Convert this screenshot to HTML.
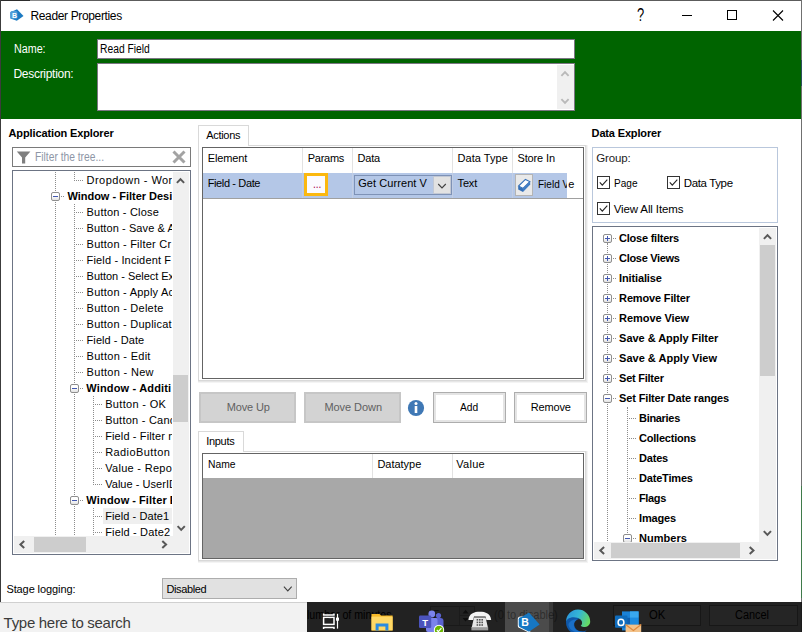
<!DOCTYPE html>
<html lang="en">
<head>
<meta charset="utf-8">
<title>Reader Properties</title>
<style>
*{box-sizing:border-box;margin:0;padding:0}
html,body{width:802px;height:632px;overflow:hidden;background:#fff}
body{font-family:"Liberation Sans",sans-serif;font-size:11px;color:#000;position:relative}
.a{position:absolute}
.t{position:absolute;white-space:nowrap}
svg{position:absolute;left:0;top:0;overflow:visible}
#win{position:absolute;left:0;top:0;width:802px;height:632px;background:#fff;overflow:hidden}
.clip{position:absolute;overflow:hidden}
</style>
</head>
<body>
<div id="win">
<div class="a" style="left:0px;top:0px;width:802px;height:1px;background:#5c5c5c;"></div>
<div class="a" style="left:0px;top:0px;width:30px;height:1px;background:#2c2c2c;"></div>
<div class="a" style="left:30px;top:0px;width:20px;height:1px;background:#8c8c8c;"></div>
<div class="a" style="left:0px;top:0px;width:1px;height:603px;background:#3c3c3c;"></div>
<div class="a" style="left:801px;top:0px;width:1px;height:603px;background:#707070;"></div>
<div class="a" style="left:801px;top:60px;width:1px;height:26px;background:#2d4f5e;"></div>
<div class="a" style="left:801px;top:486px;width:1px;height:112px;background:#3f7a4a;"></div>
<svg width="802" height="31" viewBox="0 0 802 31">
<polygon points="10.4,12.2 17,9.2 23.5,16 16.8,20.8 10.4,18.4" fill="#1c7ac2"/>
<rect x="10.4" y="11" width="7" height="7.8" rx="1.6" fill="#4f9dd8"/>
<text x="11.9" y="17.7" font-family="Liberation Sans, sans-serif" font-size="7" font-weight="bold" fill="#fff">B</text>
<text x="637" y="21.2" font-family="Liberation Sans, sans-serif" font-size="17.5" fill="#000" transform="translate(637.2 0) scale(0.74 1) translate(-637.2 0)">?</text>
<line x1="682" y1="15.5" x2="692" y2="15.5" stroke="#000" stroke-width="1"/>
<rect x="727.5" y="10.5" width="9" height="9" fill="none" stroke="#000" stroke-width="1"/>
<path d="M773 10.5 L783 20.5 M783 10.5 L773 20.5" stroke="#000" stroke-width="1.1" fill="none"/>
</svg>
<div class="t" style="left:30.5px;top:10px;font-size:12px;line-height:12px;letter-spacing:-0.358px;">Reader Properties</div>
<div class="a" style="left:1px;top:31px;width:800px;height:88px;background:#006400;"></div>
<div class="t" style="left:13.5px;top:43px;font-size:12px;line-height:12px;color:#fff;transform:scaleX(0.8941);transform-origin:0 0;">Name:</div>
<div class="t" style="left:13.5px;top:68px;font-size:12px;line-height:12px;color:#fff;letter-spacing:-0.297px;">Description:</div>
<div class="a" style="left:97px;top:39px;width:478px;height:20px;background:#fff;border:1px solid #7b7583;"></div>
<div class="t" style="left:100.4px;top:43px;font-size:12px;line-height:12px;transform:scaleX(0.8582);transform-origin:0 0;">Read Field</div>
<div class="a" style="left:97px;top:63px;width:478px;height:48px;background:#fff;border:1px solid #7b7583;"></div>
<div class="a" style="left:557px;top:65px;width:17px;height:44px;background:#f0f0f0;"></div>
<svg width="802" height="120" viewBox="0 0 802 120"><polyline points="561.4,75.85 565,72.15 568.6,75.85" fill="none" stroke="#b9b9b9" stroke-width="1.9"/><polyline points="561.4,99.15 565,102.85 568.6,99.15" fill="none" stroke="#b9b9b9" stroke-width="1.9"/></svg>
<div class="t" style="left:8.5px;top:128px;font-size:11px;line-height:11px;font-weight:bold;letter-spacing:-0.119px;">Application Explorer</div>
<div class="a" style="left:12px;top:147px;width:179px;height:20px;background:#fff;border:1px solid #7a7a7a;"></div>
<svg width="802" height="170" viewBox="0 0 802 170">
<path d="M16.8 151.4 H30.4 L25.2 157.6 V163.6 H22 V157.6 Z" fill="#7f7f7f"/>
<path d="M173.5 151.5 L184.5 162.5 M184.5 151.5 L173.5 162.5" stroke="#a3a3a3" stroke-width="3" fill="none"/>
</svg>
<div class="t" style="left:35.3px;top:151px;font-size:12px;line-height:12px;color:#8e96a6;transform:scaleX(0.8550);transform-origin:0 0;">Filter the tree...</div>
<div class="a" style="left:12px;top:170px;width:179px;height:385px;background:#fff;border:1px solid #6c7484;"></div>
<div class="a" style="left:55px;top:172px;width:1px;height:364px;background:repeating-linear-gradient(to bottom,#8c8c8c 0 1px,transparent 1px 2px);background-position:0 0px;"></div>
<div class="a" style="left:74px;top:172px;width:1px;height:9px;background:repeating-linear-gradient(to bottom,#8c8c8c 0 1px,transparent 1px 2px);background-position:0 0px;"></div>
<div class="a" style="left:74px;top:204px;width:1px;height:332px;background:repeating-linear-gradient(to bottom,#8c8c8c 0 1px,transparent 1px 2px);background-position:0 0px;"></div>
<div class="a" style="left:93px;top:396px;width:1px;height:89px;background:repeating-linear-gradient(to bottom,#8c8c8c 0 1px,transparent 1px 2px);background-position:0 0px;"></div>
<div class="a" style="left:93px;top:508px;width:1px;height:28px;background:repeating-linear-gradient(to bottom,#8c8c8c 0 1px,transparent 1px 2px);background-position:0 0px;"></div>
<div class="clip" style="left:13px;top:171px;width:159px;height:365px">
<div class="a" style="left:90px;top:337px;width:70px;height:16px;background:#efefef;"></div>
<div class="t" style="left:73.6px;top:4px;font-size:11px;line-height:11px;letter-spacing:0.445px;">Dropdown - Wor</div>
<div class="t" style="left:54.400000000000006px;top:20px;font-size:11px;line-height:11px;font-weight:bold;letter-spacing:-0.006px;">Window - Filter Desi</div>
<div class="t" style="left:73.6px;top:36px;font-size:11px;line-height:11px;letter-spacing:0.193px;">Button - Close</div>
<div class="t" style="left:73.6px;top:52px;font-size:11px;line-height:11px;letter-spacing:0.084px;">Button - Save &amp; A</div>
<div class="t" style="left:73.6px;top:68px;font-size:11px;line-height:11px;letter-spacing:0.222px;">Button - Filter Cr</div>
<div class="t" style="left:73.6px;top:84px;font-size:11px;line-height:11px;letter-spacing:0.149px;">Field - Incident F</div>
<div class="t" style="left:73.6px;top:100px;font-size:11px;line-height:11px;letter-spacing:-0.032px;">Button - Select Ex</div>
<div class="t" style="left:73.6px;top:116px;font-size:11px;line-height:11px;letter-spacing:0.232px;">Button - Apply Ac</div>
<div class="t" style="left:73.6px;top:132px;font-size:11px;line-height:11px;letter-spacing:0.242px;">Button - Delete</div>
<div class="t" style="left:73.6px;top:148px;font-size:11px;line-height:11px;letter-spacing:0.233px;">Button - Duplicat</div>
<div class="t" style="left:73.6px;top:164px;font-size:11px;line-height:11px;letter-spacing:0.062px;">Field - Date</div>
<div class="t" style="left:73.6px;top:180px;font-size:11px;line-height:11px;letter-spacing:0.273px;">Button - Edit</div>
<div class="t" style="left:73.6px;top:196px;font-size:11px;line-height:11px;letter-spacing:0.301px;">Button - New</div>
<div class="t" style="left:73.3px;top:212px;font-size:11px;line-height:11px;font-weight:bold;letter-spacing:0.160px;">Window - Additi</div>
<div class="t" style="left:92.2px;top:228px;font-size:11px;line-height:11px;letter-spacing:0.320px;">Button - OK</div>
<div class="t" style="left:92.2px;top:244px;font-size:11px;line-height:11px;letter-spacing:0.236px;">Button - Canc</div>
<div class="t" style="left:92.2px;top:260px;font-size:11px;line-height:11px;letter-spacing:0.124px;">Field - Filter n</div>
<div class="t" style="left:92.2px;top:276px;font-size:11px;line-height:11px;letter-spacing:0.405px;">RadioButton</div>
<div class="t" style="left:92.2px;top:292px;font-size:11px;line-height:11px;letter-spacing:0.301px;">Value - Repo</div>
<div class="t" style="left:92.2px;top:308px;font-size:11px;line-height:11px;letter-spacing:0.033px;">Value - UserID</div>
<div class="t" style="left:73.3px;top:324px;font-size:11px;line-height:11px;font-weight:bold;letter-spacing:0.179px;word-spacing:-0.4px;">Window - Filter E</div>
<div class="t" style="left:92.2px;top:340px;font-size:11px;line-height:11px;letter-spacing:0.078px;">Field - Date1</div>
<div class="t" style="left:92.2px;top:356px;font-size:11px;line-height:11px;letter-spacing:0.155px;">Field - Date2</div>
</div>
<div class="a" style="left:76px;top:180px;width:7px;height:1px;background:repeating-linear-gradient(to right,#8c8c8c 0 1px,transparent 1px 2px);background-position:0px 0;"></div>
<div class="a" style="left:61px;top:196px;width:3px;height:1px;background:repeating-linear-gradient(to right,#8c8c8c 0 1px,transparent 1px 2px);background-position:0px 0;"></div>
<div class="a" style="left:51px;top:192px;width:9px;height:9px;background:linear-gradient(#fff 40%,#e2e2e2);border:1px solid #8e8e8e;border-radius:2px;"><div class="a" style="left:1px;top:3px;width:5px;height:1px;background:#4258b0"></div></div>
<div class="a" style="left:76px;top:212px;width:7px;height:1px;background:repeating-linear-gradient(to right,#8c8c8c 0 1px,transparent 1px 2px);background-position:0px 0;"></div>
<div class="a" style="left:76px;top:228px;width:7px;height:1px;background:repeating-linear-gradient(to right,#8c8c8c 0 1px,transparent 1px 2px);background-position:0px 0;"></div>
<div class="a" style="left:76px;top:244px;width:7px;height:1px;background:repeating-linear-gradient(to right,#8c8c8c 0 1px,transparent 1px 2px);background-position:0px 0;"></div>
<div class="a" style="left:76px;top:260px;width:7px;height:1px;background:repeating-linear-gradient(to right,#8c8c8c 0 1px,transparent 1px 2px);background-position:0px 0;"></div>
<div class="a" style="left:76px;top:276px;width:7px;height:1px;background:repeating-linear-gradient(to right,#8c8c8c 0 1px,transparent 1px 2px);background-position:0px 0;"></div>
<div class="a" style="left:76px;top:292px;width:7px;height:1px;background:repeating-linear-gradient(to right,#8c8c8c 0 1px,transparent 1px 2px);background-position:0px 0;"></div>
<div class="a" style="left:76px;top:308px;width:7px;height:1px;background:repeating-linear-gradient(to right,#8c8c8c 0 1px,transparent 1px 2px);background-position:0px 0;"></div>
<div class="a" style="left:76px;top:324px;width:7px;height:1px;background:repeating-linear-gradient(to right,#8c8c8c 0 1px,transparent 1px 2px);background-position:0px 0;"></div>
<div class="a" style="left:76px;top:340px;width:7px;height:1px;background:repeating-linear-gradient(to right,#8c8c8c 0 1px,transparent 1px 2px);background-position:0px 0;"></div>
<div class="a" style="left:76px;top:356px;width:7px;height:1px;background:repeating-linear-gradient(to right,#8c8c8c 0 1px,transparent 1px 2px);background-position:0px 0;"></div>
<div class="a" style="left:76px;top:372px;width:7px;height:1px;background:repeating-linear-gradient(to right,#8c8c8c 0 1px,transparent 1px 2px);background-position:0px 0;"></div>
<div class="a" style="left:80px;top:388px;width:3px;height:1px;background:repeating-linear-gradient(to right,#8c8c8c 0 1px,transparent 1px 2px);background-position:0px 0;"></div>
<div class="a" style="left:70px;top:384px;width:9px;height:9px;background:linear-gradient(#fff 40%,#e2e2e2);border:1px solid #8e8e8e;border-radius:2px;"><div class="a" style="left:1px;top:3px;width:5px;height:1px;background:#4258b0"></div></div>
<div class="a" style="left:95px;top:404px;width:7px;height:1px;background:repeating-linear-gradient(to right,#8c8c8c 0 1px,transparent 1px 2px);background-position:0px 0;"></div>
<div class="a" style="left:95px;top:420px;width:7px;height:1px;background:repeating-linear-gradient(to right,#8c8c8c 0 1px,transparent 1px 2px);background-position:0px 0;"></div>
<div class="a" style="left:95px;top:436px;width:7px;height:1px;background:repeating-linear-gradient(to right,#8c8c8c 0 1px,transparent 1px 2px);background-position:0px 0;"></div>
<div class="a" style="left:95px;top:452px;width:7px;height:1px;background:repeating-linear-gradient(to right,#8c8c8c 0 1px,transparent 1px 2px);background-position:0px 0;"></div>
<div class="a" style="left:95px;top:468px;width:7px;height:1px;background:repeating-linear-gradient(to right,#8c8c8c 0 1px,transparent 1px 2px);background-position:0px 0;"></div>
<div class="a" style="left:95px;top:484px;width:7px;height:1px;background:repeating-linear-gradient(to right,#8c8c8c 0 1px,transparent 1px 2px);background-position:0px 0;"></div>
<div class="a" style="left:80px;top:500px;width:3px;height:1px;background:repeating-linear-gradient(to right,#8c8c8c 0 1px,transparent 1px 2px);background-position:0px 0;"></div>
<div class="a" style="left:70px;top:496px;width:9px;height:9px;background:linear-gradient(#fff 40%,#e2e2e2);border:1px solid #8e8e8e;border-radius:2px;"><div class="a" style="left:1px;top:3px;width:5px;height:1px;background:#4258b0"></div></div>
<div class="a" style="left:95px;top:516px;width:7px;height:1px;background:repeating-linear-gradient(to right,#8c8c8c 0 1px,transparent 1px 2px);background-position:0px 0;"></div>
<div class="a" style="left:95px;top:532px;width:7px;height:1px;background:repeating-linear-gradient(to right,#8c8c8c 0 1px,transparent 1px 2px);background-position:0px 0;"></div>
<div class="a" style="left:173px;top:172px;width:16px;height:381px;background:#f0f0f0;"></div>
<div class="a" style="left:173px;top:375px;width:15px;height:47px;background:#cdcdcd;"></div>
<div class="a" style="left:14px;top:536px;width:159px;height:17px;background:#f0f0f0;"></div>
<div class="a" style="left:34px;top:537px;width:52px;height:15px;background:#cdcdcd;"></div>
<svg width="802" height="632" viewBox="0 0 802 632"><polyline points="176.9,182.9 180.5,179.1 184.1,182.9" fill="none" stroke="#585858" stroke-width="2"/><polyline points="177.6,526.1 181.2,529.9 184.79999999999998,526.1" fill="none" stroke="#585858" stroke-width="2"/><polyline points="24.2,540.9 20.400000000000002,544.5 24.2,548.1" fill="none" stroke="#585858" stroke-width="2"/><polyline points="162.29999999999998,540.9 166.1,544.5 162.29999999999998,548.1" fill="none" stroke="#585858" stroke-width="2"/></svg>
<div class="a" style="left:198px;top:145px;width:390px;height:238px;background:#f4f4f4;"></div>
<div class="a" style="left:198px;top:145px;width:389px;height:237px;background:#e6e6e6;"></div>
<div class="a" style="left:198px;top:145px;width:388px;height:236px;background:#fff;border:1px solid #d8d8d8;"></div>
<div class="a" style="left:198px;top:125px;width:51px;height:21px;background:#fff;border:1px solid #d9d9d9;border-bottom:none;"></div>
<div class="t" style="left:206.2px;top:130px;font-size:11px;line-height:11px;letter-spacing:-0.297px;">Actions</div>
<div class="a" style="left:202px;top:147px;width:382px;height:232px;background:#fff;border:1px solid #646464;"></div>
<div class="a" style="left:302px;top:148px;width:1px;height:25px;background:#e2e2e2;"></div>
<div class="a" style="left:352px;top:148px;width:1px;height:25px;background:#e2e2e2;"></div>
<div class="a" style="left:452px;top:148px;width:1px;height:25px;background:#e2e2e2;"></div>
<div class="a" style="left:512px;top:148px;width:1px;height:25px;background:#e2e2e2;"></div>
<div class="t" style="left:207.7px;top:153px;font-size:11px;line-height:11px;letter-spacing:-0.137px;">Element</div>
<div class="t" style="left:307.7px;top:153px;font-size:11px;line-height:11px;letter-spacing:-0.251px;">Params</div>
<div class="t" style="left:357.6px;top:153px;font-size:11px;line-height:11px;letter-spacing:-0.237px;">Data</div>
<div class="t" style="left:457.6px;top:153px;font-size:11px;line-height:11px;letter-spacing:0.027px;">Data Type</div>
<div class="t" style="left:517.5px;top:153px;font-size:11px;line-height:11px;letter-spacing:-0.141px;">Store In</div>
<div class="a" style="left:203px;top:173px;width:364px;height:25px;background:#b4c7e7;"></div>
<div class="a" style="left:203px;top:198px;width:380px;height:1px;background:#a0a0a0;"></div>
<div class="a" style="left:302px;top:173px;width:1px;height:25px;background:#c2cee4;"></div>
<div class="a" style="left:352px;top:173px;width:1px;height:25px;background:#c2cee4;"></div>
<div class="a" style="left:452px;top:173px;width:1px;height:25px;background:#c2cee4;"></div>
<div class="a" style="left:512px;top:173px;width:1px;height:25px;background:#c2cee4;"></div>
<div class="t" style="left:207.7px;top:178px;font-size:11px;line-height:11px;letter-spacing:-0.372px;">Field - Date</div>
<div class="a" style="left:304px;top:173px;width:24px;height:23px;background:#fbfbff;border:3px solid #fbb80f;"></div>
<div class="t" style="left:312.5px;top:178px;font-size:12px;line-height:12px;color:#a8004e;transform:scaleX(0.8387);transform-origin:0 0;">...</div>
<div class="a" style="left:354px;top:175px;width:98px;height:20px;background:#b4c7e7;border:1px solid #7e92b6;"></div>
<div class="t" style="left:358.2px;top:178px;font-size:11px;line-height:11px;letter-spacing:0.072px;">Get Current V</div>
<div class="a" style="left:433px;top:176px;width:18px;height:18px;background:#e2e2e2;border:1px solid #c2c8d4;"></div>
<svg width="802" height="200" viewBox="0 0 802 200"><polyline points="438.2,184.0 442,188.0 445.8,184.0" fill="none" stroke="#404040" stroke-width="1.1"/></svg>
<div class="t" style="left:457.6px;top:178px;font-size:11px;line-height:11px;letter-spacing:-0.172px;">Text</div>
<div class="a" style="left:515px;top:174px;width:18px;height:22px;background:#e9e9e9;border:1px solid #b4b4b4;"></div>
<svg width="802" height="200" viewBox="0 0 802 200"><polygon points="518.6,186 525.4,179.4 529.8,181.6 523,188.4" fill="#fff" stroke="#3570b8" stroke-width="1.1"/><polygon points="518.2,186.2 523,188.6 523,192 518.2,189.4" fill="#3570b8"/><polygon points="523,188.6 530.2,181.4 530.2,184.6 523,192" fill="#3f7cc4"/></svg>
<div class="clip" style="left:536px;top:174px;width:31px;height:24px">
<div class="t" style="left:2.4px;top:5px;font-size:11px;line-height:11px;transform:scaleX(0.9109);transform-origin:0 0;">Field V</div>
</div>
<div class="t" style="left:568.2px;top:179px;font-size:11px;line-height:11px;">e</div>
<div class="a" style="left:199px;top:392px;width:97px;height:31px;background:#d3d3d3;border:2px solid #c6c6c6;"></div>
<div class="t" style="left:226.7px;top:402px;font-size:11px;line-height:11px;color:#616161;letter-spacing:-0.133px;">Move Up</div>
<div class="a" style="left:304px;top:392px;width:97px;height:31px;background:#d3d3d3;border:2px solid #c6c6c6;"></div>
<div class="t" style="left:324.4px;top:402px;font-size:11px;line-height:11px;color:#616161;letter-spacing:-0.053px;">Move Down</div>
<svg width="802" height="430" viewBox="0 0 802 430"><circle cx="416" cy="408" r="8.1" fill="#3f78b5"/><circle cx="416" cy="403.4" r="1.5" fill="#fff"/><rect x="414.7" y="406" width="2.6" height="7" fill="#fff"/></svg>
<div class="a" style="left:433px;top:392px;width:73px;height:31px;background:#fff;border:1px solid #adadad;"><div class="a" style="left:0;top:0;right:0;bottom:0;border:2px solid #e4e4e4"></div></div>
<div class="t" style="left:460.3px;top:402px;font-size:11px;line-height:11px;transform:scaleX(0.9296);transform-origin:0 0;">Add</div>
<div class="a" style="left:514px;top:392px;width:73px;height:31px;background:#fff;border:1px solid #adadad;"><div class="a" style="left:0;top:0;right:0;bottom:0;border:2px solid #e4e4e4"></div></div>
<div class="t" style="left:530.8px;top:402px;font-size:11px;line-height:11px;letter-spacing:-0.161px;">Remove</div>
<div class="a" style="left:198px;top:451px;width:390px;height:112px;background:#f4f4f4;"></div>
<div class="a" style="left:198px;top:451px;width:389px;height:111px;background:#e6e6e6;"></div>
<div class="a" style="left:198px;top:451px;width:388px;height:110px;background:#fff;border:1px solid #d8d8d8;"></div>
<div class="a" style="left:198px;top:431px;width:46px;height:21px;background:#fff;border:1px solid #d9d9d9;border-bottom:none;"></div>
<div class="t" style="left:206.2px;top:436px;font-size:11px;line-height:11px;letter-spacing:-0.295px;">Inputs</div>
<div class="a" style="left:202px;top:453px;width:382px;height:106px;background:#a8a8a8;border:1px solid #646464;"></div>
<div class="a" style="left:203px;top:454px;width:380px;height:24px;background:#fff;"></div>
<div class="a" style="left:372px;top:454px;width:1px;height:24px;background:#e2e2e2;"></div>
<div class="a" style="left:452px;top:454px;width:1px;height:24px;background:#e2e2e2;"></div>
<div class="t" style="left:207.7px;top:459px;font-size:11px;line-height:11px;transform:scaleX(0.9372);transform-origin:0 0;">Name</div>
<div class="t" style="left:377.4px;top:459px;font-size:11px;line-height:11px;letter-spacing:-0.016px;">Datatype</div>
<div class="t" style="left:456.3px;top:459px;font-size:11px;line-height:11px;letter-spacing:0.274px;">Value</div>
<div class="t" style="left:591.6px;top:128px;font-size:11px;line-height:11px;font-weight:bold;letter-spacing:-0.156px;">Data Explorer</div>
<div class="a" style="left:592px;top:147px;width:186px;height:76px;background:#fff;border:1px solid #b9c7dc;"></div>
<div class="t" style="left:596.3px;top:153px;font-size:11.5px;line-height:11.5px;color:#222;letter-spacing:-0.145px;">Group:</div>
<div class="a" style="left:597px;top:176px;width:13px;height:13px;background:#fff;border:1px solid #333;"></div>
<svg width="802" height="632" viewBox="0 0 802 632"><polyline points="599.8,182.4 602.3,185.2 607.3,179.6" fill="none" stroke="#222" stroke-width="1.1"/></svg>
<div class="t" style="left:613.7px;top:178px;font-size:11.5px;line-height:11.5px;transform:scaleX(0.8749);transform-origin:0 0;">Page</div>
<div class="a" style="left:667px;top:176px;width:13px;height:13px;background:#fff;border:1px solid #333;"></div>
<svg width="802" height="632" viewBox="0 0 802 632"><polyline points="669.8,182.4 672.3,185.2 677.3,179.6" fill="none" stroke="#222" stroke-width="1.1"/></svg>
<div class="t" style="left:683.7px;top:178px;font-size:11.5px;line-height:11.5px;letter-spacing:-0.358px;">Data Type</div>
<div class="a" style="left:597px;top:202px;width:13px;height:13px;background:#fff;border:1px solid #333;"></div>
<svg width="802" height="632" viewBox="0 0 802 632"><polyline points="599.8,208.4 602.3,211.2 607.3,205.6" fill="none" stroke="#222" stroke-width="1.1"/></svg>
<div class="t" style="left:613.7px;top:204px;font-size:11.5px;line-height:11.5px;letter-spacing:-0.120px;">View All Items</div>
<div class="a" style="left:592px;top:226px;width:186px;height:335px;background:#fff;border:1px solid #6c7484;"></div>
<div class="a" style="left:607px;top:243px;width:1px;height:299px;background:repeating-linear-gradient(to bottom,#8c8c8c 0 1px,transparent 1px 2px);background-position:0 1px;"></div>
<div class="a" style="left:627px;top:407px;width:1px;height:135px;background:repeating-linear-gradient(to bottom,#8c8c8c 0 1px,transparent 1px 2px);background-position:0 1px;"></div>
<div class="clip" style="left:593px;top:227px;width:166px;height:315px">
<div class="t" style="left:26.100000000000023px;top:6px;font-size:11px;line-height:11px;font-weight:bold;letter-spacing:-0.236px;">Close filters</div>
<div class="t" style="left:26.100000000000023px;top:26px;font-size:11px;line-height:11px;font-weight:bold;letter-spacing:-0.318px;">Close Views</div>
<div class="t" style="left:26.100000000000023px;top:46px;font-size:11px;line-height:11px;font-weight:bold;letter-spacing:-0.143px;">Initialise</div>
<div class="t" style="left:26.100000000000023px;top:66px;font-size:11px;line-height:11px;font-weight:bold;letter-spacing:-0.158px;">Remove Filter</div>
<div class="t" style="left:26.100000000000023px;top:86px;font-size:11px;line-height:11px;font-weight:bold;letter-spacing:-0.067px;">Remove View</div>
<div class="t" style="left:26.100000000000023px;top:106px;font-size:11px;line-height:11px;font-weight:bold;letter-spacing:-0.034px;">Save &amp; Apply Filter</div>
<div class="t" style="left:26.100000000000023px;top:126px;font-size:11px;line-height:11px;font-weight:bold;letter-spacing:0.004px;">Save &amp; Apply View</div>
<div class="t" style="left:26.100000000000023px;top:146px;font-size:11px;line-height:11px;font-weight:bold;letter-spacing:-0.248px;">Set Filter</div>
<div class="t" style="left:26.100000000000023px;top:166px;font-size:11px;line-height:11px;font-weight:bold;letter-spacing:-0.145px;">Set Filter Date ranges</div>
<div class="t" style="left:46px;top:186px;font-size:11px;line-height:11px;font-weight:bold;letter-spacing:-0.303px;">Binaries</div>
<div class="t" style="left:46px;top:206px;font-size:11px;line-height:11px;font-weight:bold;letter-spacing:-0.209px;">Collections</div>
<div class="t" style="left:46px;top:226px;font-size:11px;line-height:11px;font-weight:bold;letter-spacing:-0.194px;">Dates</div>
<div class="t" style="left:46px;top:246px;font-size:11px;line-height:11px;font-weight:bold;letter-spacing:-0.182px;">DateTimes</div>
<div class="t" style="left:46px;top:266px;font-size:11px;line-height:11px;font-weight:bold;letter-spacing:-0.347px;">Flags</div>
<div class="t" style="left:46px;top:286px;font-size:11px;line-height:11px;font-weight:bold;letter-spacing:-0.170px;">Images</div>
<div class="t" style="left:46px;top:306px;font-size:11px;line-height:11px;font-weight:bold;letter-spacing:0.045px;">Numbers</div>
</div>
<div class="clip" style="left:593px;top:227px;width:167px;height:316px"><div class="a" style="left:-593px;top:-227px;width:802px;height:632px">
<div class="a" style="left:613px;top:238px;width:3px;height:1px;background:repeating-linear-gradient(to right,#8c8c8c 0 1px,transparent 1px 2px);background-position:0px 0;"></div>
<div class="a" style="left:603px;top:234px;width:9px;height:9px;background:linear-gradient(#fff 40%,#e2e2e2);border:1px solid #8e8e8e;border-radius:2px;"><div class="a" style="left:1px;top:3px;width:5px;height:1px;background:#4258b0"></div><div class="a" style="left:3px;top:1px;width:1px;height:5px;background:#4258b0"></div></div>
<div class="a" style="left:613px;top:258px;width:3px;height:1px;background:repeating-linear-gradient(to right,#8c8c8c 0 1px,transparent 1px 2px);background-position:0px 0;"></div>
<div class="a" style="left:603px;top:254px;width:9px;height:9px;background:linear-gradient(#fff 40%,#e2e2e2);border:1px solid #8e8e8e;border-radius:2px;"><div class="a" style="left:1px;top:3px;width:5px;height:1px;background:#4258b0"></div><div class="a" style="left:3px;top:1px;width:1px;height:5px;background:#4258b0"></div></div>
<div class="a" style="left:613px;top:278px;width:3px;height:1px;background:repeating-linear-gradient(to right,#8c8c8c 0 1px,transparent 1px 2px);background-position:0px 0;"></div>
<div class="a" style="left:603px;top:274px;width:9px;height:9px;background:linear-gradient(#fff 40%,#e2e2e2);border:1px solid #8e8e8e;border-radius:2px;"><div class="a" style="left:1px;top:3px;width:5px;height:1px;background:#4258b0"></div><div class="a" style="left:3px;top:1px;width:1px;height:5px;background:#4258b0"></div></div>
<div class="a" style="left:613px;top:298px;width:3px;height:1px;background:repeating-linear-gradient(to right,#8c8c8c 0 1px,transparent 1px 2px);background-position:0px 0;"></div>
<div class="a" style="left:603px;top:294px;width:9px;height:9px;background:linear-gradient(#fff 40%,#e2e2e2);border:1px solid #8e8e8e;border-radius:2px;"><div class="a" style="left:1px;top:3px;width:5px;height:1px;background:#4258b0"></div><div class="a" style="left:3px;top:1px;width:1px;height:5px;background:#4258b0"></div></div>
<div class="a" style="left:613px;top:318px;width:3px;height:1px;background:repeating-linear-gradient(to right,#8c8c8c 0 1px,transparent 1px 2px);background-position:0px 0;"></div>
<div class="a" style="left:603px;top:314px;width:9px;height:9px;background:linear-gradient(#fff 40%,#e2e2e2);border:1px solid #8e8e8e;border-radius:2px;"><div class="a" style="left:1px;top:3px;width:5px;height:1px;background:#4258b0"></div><div class="a" style="left:3px;top:1px;width:1px;height:5px;background:#4258b0"></div></div>
<div class="a" style="left:613px;top:338px;width:3px;height:1px;background:repeating-linear-gradient(to right,#8c8c8c 0 1px,transparent 1px 2px);background-position:0px 0;"></div>
<div class="a" style="left:603px;top:334px;width:9px;height:9px;background:linear-gradient(#fff 40%,#e2e2e2);border:1px solid #8e8e8e;border-radius:2px;"><div class="a" style="left:1px;top:3px;width:5px;height:1px;background:#4258b0"></div><div class="a" style="left:3px;top:1px;width:1px;height:5px;background:#4258b0"></div></div>
<div class="a" style="left:613px;top:358px;width:3px;height:1px;background:repeating-linear-gradient(to right,#8c8c8c 0 1px,transparent 1px 2px);background-position:0px 0;"></div>
<div class="a" style="left:603px;top:354px;width:9px;height:9px;background:linear-gradient(#fff 40%,#e2e2e2);border:1px solid #8e8e8e;border-radius:2px;"><div class="a" style="left:1px;top:3px;width:5px;height:1px;background:#4258b0"></div><div class="a" style="left:3px;top:1px;width:1px;height:5px;background:#4258b0"></div></div>
<div class="a" style="left:613px;top:378px;width:3px;height:1px;background:repeating-linear-gradient(to right,#8c8c8c 0 1px,transparent 1px 2px);background-position:0px 0;"></div>
<div class="a" style="left:603px;top:374px;width:9px;height:9px;background:linear-gradient(#fff 40%,#e2e2e2);border:1px solid #8e8e8e;border-radius:2px;"><div class="a" style="left:1px;top:3px;width:5px;height:1px;background:#4258b0"></div><div class="a" style="left:3px;top:1px;width:1px;height:5px;background:#4258b0"></div></div>
<div class="a" style="left:613px;top:398px;width:3px;height:1px;background:repeating-linear-gradient(to right,#8c8c8c 0 1px,transparent 1px 2px);background-position:0px 0;"></div>
<div class="a" style="left:603px;top:394px;width:9px;height:9px;background:linear-gradient(#fff 40%,#e2e2e2);border:1px solid #8e8e8e;border-radius:2px;"><div class="a" style="left:1px;top:3px;width:5px;height:1px;background:#4258b0"></div></div>
<div class="a" style="left:629px;top:418px;width:7px;height:1px;background:repeating-linear-gradient(to right,#8c8c8c 0 1px,transparent 1px 2px);background-position:0px 0;"></div>
<div class="a" style="left:629px;top:438px;width:7px;height:1px;background:repeating-linear-gradient(to right,#8c8c8c 0 1px,transparent 1px 2px);background-position:0px 0;"></div>
<div class="a" style="left:629px;top:458px;width:7px;height:1px;background:repeating-linear-gradient(to right,#8c8c8c 0 1px,transparent 1px 2px);background-position:0px 0;"></div>
<div class="a" style="left:629px;top:478px;width:7px;height:1px;background:repeating-linear-gradient(to right,#8c8c8c 0 1px,transparent 1px 2px);background-position:0px 0;"></div>
<div class="a" style="left:629px;top:498px;width:7px;height:1px;background:repeating-linear-gradient(to right,#8c8c8c 0 1px,transparent 1px 2px);background-position:0px 0;"></div>
<div class="a" style="left:629px;top:518px;width:7px;height:1px;background:repeating-linear-gradient(to right,#8c8c8c 0 1px,transparent 1px 2px);background-position:0px 0;"></div>
<div class="a" style="left:633px;top:538px;width:3px;height:1px;background:repeating-linear-gradient(to right,#8c8c8c 0 1px,transparent 1px 2px);background-position:0px 0;"></div>
<div class="a" style="left:623px;top:534px;width:9px;height:9px;background:linear-gradient(#fff 40%,#e2e2e2);border:1px solid #8e8e8e;border-radius:2px;"><div class="a" style="left:1px;top:3px;width:5px;height:1px;background:#4258b0"></div></div>
</div></div>
<div class="a" style="left:759px;top:228px;width:17px;height:331px;background:#f0f0f0;"></div>
<div class="a" style="left:760px;top:245px;width:15px;height:131px;background:#cdcdcd;"></div>
<div class="a" style="left:594px;top:542px;width:165px;height:17px;background:#f0f0f0;"></div>
<div class="a" style="left:611px;top:543px;width:129px;height:15px;background:#cdcdcd;"></div>
<svg width="802" height="632" viewBox="0 0 802 632"><polyline points="763.9,238.9 767.5,235.1 771.1,238.9" fill="none" stroke="#585858" stroke-width="2"/><polyline points="763.8,531.1 767.4,534.9 771.0,531.1" fill="none" stroke="#585858" stroke-width="2"/><polyline points="604.1,546.9 600.3000000000001,550.5 604.1,554.1" fill="none" stroke="#585858" stroke-width="2"/><polyline points="749.7,546.9 753.5,550.5 749.7,554.1" fill="none" stroke="#585858" stroke-width="2"/></svg>
<div class="t" style="left:6.4px;top:584px;font-size:11px;line-height:11px;letter-spacing:-0.096px;">Stage logging:</div>
<div class="a" style="left:162px;top:578px;width:135px;height:21px;background:#e1e1e1;border:1px solid #adadad;"></div>
<div class="t" style="left:166.5px;top:584px;font-size:11px;line-height:11px;letter-spacing:-0.389px;">Disabled</div>
<svg width="802" height="632" viewBox="0 0 802 632"><polyline points="283.90000000000003,586.6999999999999 287.8,590.9 291.7,586.6999999999999" fill="none" stroke="#404040" stroke-width="1.1"/></svg>
<div class="a" style="left:0px;top:602px;width:307px;height:30px;background:#f2f2f2;"></div>
<div class="a" style="left:0px;top:602px;width:307px;height:1px;background:#d0d0d0;"></div>
<div class="t" style="left:3.6px;top:615px;font-size:15px;line-height:15px;color:#3b3b3b;letter-spacing:-0.294px;">Type here to search</div>
<div class="a" style="left:307px;top:602px;width:495px;height:30px;background:#222222;"></div>
<div class="a" style="left:801px;top:602px;width:1px;height:30px;background:#1a1a1a;"></div>
<div class="t" style="left:307px;top:609px;font-size:12.5px;line-height:12.5px;color:#000;transform:scaleX(0.8504);transform-origin:0 0;">lumber of minutes</div>
<div class="a" style="left:430px;top:606px;width:45px;height:20px;background:#222222;border:1px solid #191919;"></div>
<div class="a" style="left:459px;top:607px;width:1px;height:18px;background:#1b1b1b;"></div>
<div class="a" style="left:460px;top:615px;width:14px;height:1px;background:#1b1b1b;"></div>
<div class="t" style="left:433px;top:609px;font-size:12px;line-height:12px;color:rgba(0,0,0,0.55);">5</div>
<svg width="802" height="632" viewBox="0 0 802 632"><polygon points="462.6,613.4 465.6,609.8 468.6,613.4" fill="#0e0e0e"/><polygon points="462.6,618 465.6,621.6 468.6,618" fill="#0e0e0e"/></svg>
<div class="a" style="left:505px;top:602px;width:44px;height:30px;background:#4b4b4b;"></div>
<div class="a" style="left:549px;top:602px;width:4px;height:30px;background:#393939;"></div>
<div class="t" style="left:493.5px;top:609px;font-size:12.5px;line-height:12.5px;color:rgba(0,0,0,0.4);transform:scaleX(0.8829);transform-origin:0 0;">(0 to disable)</div>
<div class="a" style="left:613px;top:605px;width:88px;height:21px;background:#252525;border:1px solid #171717;"></div>
<div class="t" style="left:649px;top:609px;font-size:12px;line-height:12px;color:#000;transform:scaleX(0.9398);transform-origin:0 0;">OK</div>
<div class="a" style="left:709px;top:605px;width:89px;height:21px;background:#252525;border:1px solid #171717;"></div>
<div class="t" style="left:735.4px;top:609px;font-size:12px;line-height:12px;color:#000;transform:scaleX(0.9101);transform-origin:0 0;">Cancel</div>
<svg width="802" height="632" viewBox="0 0 802 632">
<g fill="none" stroke="#fff" stroke-width="1.5"><rect x="323.6" y="617.4" width="10.4" height="7"/><polyline points="323.6,613.4 323.6,614.9 334,614.9 334,613.4"/><polyline points="323.6,629 323.6,627.5 334,627.5 334,629"/><line x1="337.5" y1="613.8" x2="337.5" y2="628.6" stroke-width="1.2"/></g><rect x="336" y="617.6" width="3" height="3.1" fill="#fff"/>
<path d="M371.5 614 H379.5 L381 615.6 H392.6 V630.4 H371.5 Z" fill="#f7b928"/><rect x="371.5" y="616.6" width="21.1" height="13.8" fill="#ffd866"/><path d="M375.6 630.4 V623.6 H388.4 V630.4 H385.4 V626.6 H378.6 V630.4 Z" fill="#2b8be0"/>
<circle cx="438.5" cy="615.5" r="2.6" fill="#5a62d0"/><circle cx="431.8" cy="614" r="3.4" fill="#7b83eb"/><rect x="426" y="618" width="17.5" height="13" rx="3" fill="#5a62d0"/><rect x="426" y="618" width="11.5" height="14" rx="2" fill="#7b83eb"/><rect x="419" y="615.5" width="12.2" height="12.4" rx="1.2" fill="#4b53bc"/><text x="422.2" y="625.6" font-family="Liberation Sans, sans-serif" font-size="9.5" font-weight="bold" fill="#fff">T</text><circle cx="439" cy="630" r="5.2" fill="#fff"/><circle cx="439" cy="630" r="4.2" fill="#6bb700"/><polyline points="436.8,630 438.4,631.6 441.4,628.2" fill="none" stroke="#fff" stroke-width="1.2"/>
<path d="M468.4 620 C469 613.5 474 611.8 479.8 611.8 C485.6 611.8 490.6 613.5 491.2 620 L486.4 620 L485.6 616.6 L474 616.6 L473.2 620 Z" fill="#f4f4f4"/><path d="M474 617.4 H485.6 L488 628 H471.6 Z" fill="#e6e6e6"/><rect x="471.4" y="627.2" width="16.8" height="3.2" fill="#9a9a9a"/><g fill="#555"><rect x="476.6" y="619" width="1.6" height="1.6"/><rect x="479" y="619" width="1.6" height="1.6"/><rect x="481.4" y="619" width="1.6" height="1.6"/><rect x="476.6" y="621.6" width="1.6" height="1.6"/><rect x="479" y="621.6" width="1.6" height="1.6"/><rect x="481.4" y="621.6" width="1.6" height="1.6"/><rect x="476.6" y="624.2" width="1.6" height="1.6"/><rect x="479" y="624.2" width="1.6" height="1.6"/><rect x="481.4" y="624.2" width="1.6" height="1.6"/></g>
<rect x="517.8" y="616.4" width="11.6" height="11.6" rx="2.6" fill="#fff"/><polygon points="519.6,628 529,632.6 530.6,631 520.6,626.4" fill="#fff"/><polygon points="529,612.4 539.6,624.4 529,631.8 519.6,627 519.2,618.4" fill="#1777c2"/><rect x="518.7" y="617.3" width="10.4" height="9.8" rx="2" fill="#1777c2"/><text x="521.2" y="626.2" font-family="Liberation Sans, sans-serif" font-size="10.5" font-weight="bold" fill="#fff">B</text>
<defs><linearGradient id="eg" x1="0" y1="0.2" x2="1" y2="0.5"><stop offset="0" stop-color="#2a93dc"/><stop offset="0.5" stop-color="#34b6d6"/><stop offset="1" stop-color="#66da62"/></linearGradient></defs>
<path d="M566 622 A12.1 12.1 0 0 1 590.2 621.4 C590.2 625.4 586.8 627 584 627 C581.4 627 580.8 625.8 580.8 625.8 C582.6 624.4 582.6 621.6 580.8 619.8 C577.6 616.8 570.4 617.6 566 622 Z" fill="url(#eg)"/>
<path d="M566 621.4 C567.6 617 575.6 615.6 580.4 619.4 C576.4 618.6 573.6 621.8 574.4 625.8 C575.4 630.4 580.6 633 586.6 630.2 C584.4 633 581 634.4 578 634.4 C571 634.4 565.6 628.4 566 621.4 Z" fill="#0f57a8"/>
<path d="M568.4 624.4 C569.6 620.6 574.2 618.8 577.6 619.6 C574.6 620.8 573.4 623.4 574 626 C574.8 629.6 578.4 632 582.6 631.4 C576.6 634 569.2 630.6 568.4 624.4 Z" fill="#1a6fc6"/>
<rect x="622" y="611.4" width="16.6" height="19" fill="#1a82d8"/><rect x="630" y="611.4" width="8.6" height="6.4" fill="#39a7ee"/><rect x="622" y="617.8" width="8" height="6.4" fill="#0f5fb0"/><rect x="630" y="617.8" width="8.6" height="6.4" fill="#1c8be0"/><rect x="615" y="615.4" width="12.4" height="12.4" rx="1" fill="#0f6cbd"/><ellipse cx="621" cy="622.4" rx="2.9" ry="3.1" fill="none" stroke="#fff" stroke-width="1.5"/><rect x="625.6" y="624.6" width="15.6" height="7.4" fill="#f2c28a"/><polyline points="625.6,624.6 633.4,630.6 641.2,624.6" fill="none" stroke="#e08a3c" stroke-width="1.2"/>
</svg>
</div>
</body>
</html>
